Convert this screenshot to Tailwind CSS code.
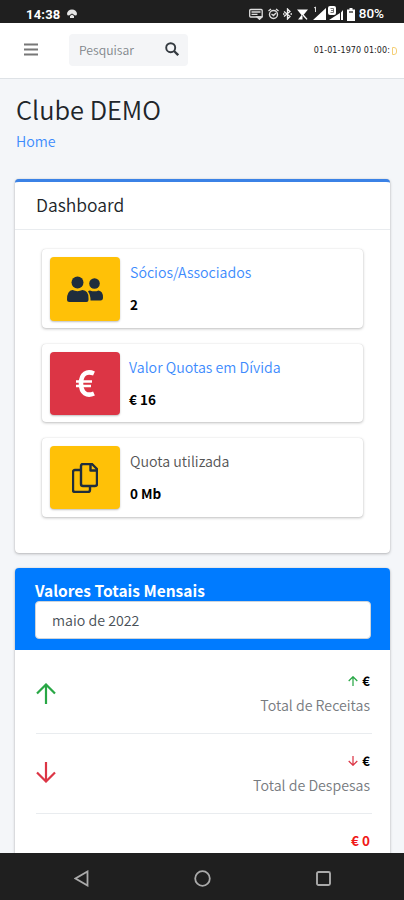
<!doctype html>
<html lang="pt">
<head>
    <meta charset="UTF-8">
    <meta name="viewport" content="width=device-width, initial-scale=1">
    <title>Clube DEMO</title>
    <script src="https://cdn.jsdelivr.net/npm/@tailwindcss/browser@4"></script>
</head>
<body class="bg-[#f4f6f9] font-['Noto_Sans_CJK_JP','Noto_Sans',sans-serif] font-[350] text-[#212529]">
<div class="flex flex-col h-[900px] overflow-hidden">

    <!-- Status bar -->
    <div class="h-[23px] shrink-0 bg-[#1f1f1f] text-white flex items-center pl-[26px] pr-5 pt-[5px] font-['Roboto',sans-serif]">
        <span class="text-[13px] leading-none font-bold tracking-[0.2px]">14:38</span>
        <svg class="ml-[6px] w-[10px] h-[10px]" viewBox="0 0 10 10" fill="#e5e5e5"><path d="M0 5a5 4.500 0 0 1 10 0q0 1.500-2 1.500L5 4.500 2 6.500Q0 6.500 0 5zM3 7 5 5.400 7 7v2H3z"/></svg>
        <div class="ml-auto flex items-center">
            <svg class="w-[14px] h-3" viewBox="0 0 14 12" fill="none" stroke="#ddd" stroke-width="1.300"><rect x=".7" y="1.500" width="12.500" height="7.500" rx="1"/><path d="M2.500 4h9M2.500 6.300h6M8 9h5l-2.500 2.300z"/></svg>
            <svg class="ml-[5px] w-[11px] h-3" viewBox="0 0 11 12" fill="none" stroke="#ddd" stroke-width="1.400"><circle cx="5.500" cy="6.500" r="4"/><path d="M.5 3 3 1M10.500 3 8 1M3.500 6l2 1.500L8 5"/></svg>
            <svg class="ml-[4px] w-[9px] h-3" viewBox="0 0 9 12" fill="none" stroke="#eee" stroke-width="1.300"><path d="m1 3.500 6 5L4.500 11V1L7 3.500l-6 5M0 6h1.500M7.500 6H9"/></svg>
            <svg class="ml-[5px] w-[11px] h-3" viewBox="0 0 11 12" fill="#fff"><path d="M0 1.500h11L6.500 7h-2zM5.500 6v5.500H1zM6.500 8l3.500 3.500M6 7h1l3.500 4-1 .8L6 8z"/></svg>
            <svg class="ml-[4px] w-8 h-4" viewBox="0 0 32 16" fill="#fff">
                <path d="M14 2v12H1zM31 4v10h-2V6.500zM28 7v7H17z"/>
                <path d="M2 2 3.500 1v5" fill="none" stroke="#ddd"/>
                <rect x="16" y="0" width="8" height="9" rx="2"/>
                <path d="M18.500 2.500h3v4h-3M19 4.500h2.500" fill="none" stroke="#555" stroke-width=".8"/>
            </svg>
            <svg class="ml-[3px] w-[8px] h-[13px]" viewBox="0 0 8 13"><path d="M2.500 0h3v1.500H8V13H0V1.500h2.500z" fill="#fff"/><path d="M2 4h4" stroke="#444" stroke-width="1.500"/></svg>
            <span class="ml-1 text-[13.500px] leading-none font-medium">80%</span>
        </div>
    </div>

    <!-- Navbar -->
    <div class="h-14 shrink-0 bg-white border-b border-[#dee2e6] flex items-center pl-6 pr-[7px]">
        <svg class="w-[14px] h-[13px] -mt-[3px]" viewBox="0 0 14 13" stroke="#777" stroke-width="2"><path d="M0 1.500h14M0 6.500h14M0 11.500h14"/></svg>
        <div class="ml-[31px] -mt-px w-[119px] h-8 rounded-sm bg-[#f4f5f7] flex items-center pl-[10px] pr-[9px]">
            <span class="text-[12.200px] leading-none text-[#80858a]">Pesquisar</span>
            <svg class="ml-auto -mt-[2px] w-[14px] h-[14px]" viewBox="0 0 14 14" fill="none" stroke="#343a40" stroke-width="1.900"><circle cx="5.700" cy="5.700" r="4.500"/><path d="m9 9 4.200 4.200" stroke-width="2.300"/></svg>
        </div>
        <div class="ml-auto flex text-[8px] leading-none font-normal font-['DejaVu_Sans',sans-serif] text-[#222] whitespace-nowrap"><span class="tracking-[0.080px]">01-01-1970 01:00:</span><span class="ml-[2px] w-[5px] h-2 border border-[#f5cf76] rounded-r-[3px]"></span></div>
    </div>

    <!-- Content -->
    <div class="flex-1 min-h-0 overflow-hidden px-[15px]">
        <h1 class="mt-[14px] text-[25.400px] leading-8 font-[350] pl-px"><span>Clube DEMO</span></h1>
        <div class="mt-px text-[14.200px] leading-[30px] text-[#3d8bfd] pl-px"><span>Home</span></div>

        <div class="mt-[23px] h-[374px] bg-white rounded border-t-[3px] border-[#3b82e6] shadow-[0_0_1px_rgba(0,0,0,.2),0_1px_3px_rgba(0,0,0,.25)] w-[375px]">
            <div class="h-12 border-b border-[#e9ecef] px-[21px] text-[17.500px] leading-[45px]"><span>Dashboard</span></div>
            <div class="pt-[19px] pl-[27px] pr-[27px] flex flex-col gap-4">
                <div class="h-[79px] bg-white rounded flex p-2 shadow-[0_0_1px_rgba(0,0,0,.15),0_1px_3px_rgba(0,0,0,.25)]">
                    <div class="w-[70px] h-16 rounded bg-[#ffc107] shadow-[0_1px_2px_rgba(0,0,0,.25)] flex items-center justify-center">
                        <svg class="w-9 h-[26px]" viewBox="0 0 36 26" fill="#1f2d3d">
                            <circle cx="10.500" cy="6.500" r="6"/>
                            <path d="M5.500 14q5 2.300 10 0 6 .5 6 8v2q0 2-2 2h-17q-2.500 0-2.500-2.500Q0 14.500 5.500 14z"/>
                            <circle cx="27.500" cy="7.500" r="5.300"/>
                            <path d="M23 14.500q4.500 1.700 8.500 0 4.500.5 4.500 7 0 3-2.500 3H23.500q0-6-2.500-9 .8-1 2-1z"/>
                        </svg>
                    </div>
                    <div class="ml-[10px] text-[14.200px] leading-8"><p class="text-[#3d8bfd] -mt-px"><span>Sócios/Associados</span></p><p class="text-[13.500px] font-bold text-black"><span>2</span></p></div>
                </div>
                <div class="h-[78px] bg-white rounded flex p-2 shadow-[0_0_1px_rgba(0,0,0,.15),0_1px_3px_rgba(0,0,0,.25)]">
                    <div class="w-[70px] h-[63px] rounded bg-[#dc3545] shadow-[0_1px_2px_rgba(0,0,0,.25)] flex items-center justify-center">
                        <svg class="w-[19px] h-[27px]" viewBox="0 0 19 27" fill="none" stroke="#fff"><path d="M18 3.500C11 .5 5 3.500 5 13.500S11 26.500 18 23.500" stroke-width="4.600"/><path d="M0 11.500h16M0 16h15" stroke-width="2.600"/></svg>
                    </div>
                    <div class="ml-[9px] text-[14.200px] leading-8"><p class="text-[#3d8bfd] -mt-px"><span>Valor Quotas em Dívida</span></p><p class="text-[13.500px] font-bold text-black"><span>€ 16</span></p></div>
                </div>
                <div class="h-[79px] bg-white rounded flex p-2 shadow-[0_0_1px_rgba(0,0,0,.15),0_1px_3px_rgba(0,0,0,.25)]">
                    <div class="w-[70px] h-[63px] rounded bg-[#ffc107] shadow-[0_1px_2px_rgba(0,0,0,.25)] flex items-center justify-center">
                        <svg class="w-[26px] h-[30px]" viewBox="0 0 26 30" fill="none" stroke="#1f2d3d" stroke-width="2.400" stroke-linejoin="round"><path d="M8.500 7H3q-2 0-2 2v18q0 2 2 2h13q2 0 2-2v-4"/><path d="M11 1h9l5 5v15q0 2-2 2H11q-2 0-2-2V3q0-2 2-2zM18.500 1.500V7.500H25"/></svg>
                    </div>
                    <div class="ml-[10px] text-[14.200px] leading-8"><p class="text-[#555] -mt-px"><span>Quota utilizada</span></p><p class="text-[13.500px] font-bold text-black"><span>0 Mb</span></p></div>
                </div>
            </div>
        </div>

        <div class="mt-[15px] h-[400px] bg-white rounded w-[375px] shadow-[0_0_1px_rgba(0,0,0,.2),0_1px_3px_rgba(0,0,0,.25)]">
            <div class="h-[82px] bg-[#007bff] rounded-t px-5 pt-3">
                <h3 class="text-[15.500px] leading-5 font-bold text-white"><span>Valores Totais Mensais</span></h3>
                <div class="mt-px h-[38px] w-[336px] rounded bg-white border border-[#ced4da] pl-4 text-[14.200px] leading-[37px] text-[#495057]"><span>maio de 2022</span></div>
            </div>
            <div class="pl-[21px] pr-[18px]">
                <div class="h-[84px] border-b border-[#e9ecef] flex items-center justify-between pr-[2px]">
                    <svg class="w-5 h-[21px] mt-[3px]" viewBox="0 0 20 21" fill="none" stroke="#28a745" stroke-width="2.200"><path d="M10 21V1.500M1 10.500l9-9 9 9"/></svg>
                    <div class="text-right leading-6 mt-[3px]">
                        <p class="text-[13px] font-bold text-black flex items-center justify-end gap-1"><svg class="w-[10px] h-[10px]" viewBox="0 0 20 21" fill="none" stroke="#28a745" stroke-width="2.600"><path d="M10 21V1.500M1 10.500l9-9 9 9"/></svg>€</p>
                        <p class="text-[14.200px] text-[#777b7f]"><span>Total de Receitas</span></p>
                    </div>
                </div>
                <div class="h-20 border-b border-[#e9ecef] flex items-center justify-between pr-[2px]">
                    <svg class="w-5 h-[21px] -mt-[2px]" viewBox="0 0 20 21" fill="none" stroke="#dc3545" stroke-width="2.200"><path d="M10 0v19.500M1 10.500l9 9 9-9"/></svg>
                    <div class="text-right leading-6 -mt-[2px]">
                        <p class="text-[13px] font-bold text-black flex items-center justify-end gap-1"><svg class="w-[10px] h-[10px]" viewBox="0 0 20 21" fill="none" stroke="#dc3545" stroke-width="2.600"><path d="M10 0v19.500M1 10.500l9 9 9-9"/></svg>€</p>
                        <p class="text-[14.200px] text-[#777b7f]"><span>Total de Despesas</span></p>
                    </div>
                </div>
                <p class="mt-[14px] pr-[2px] text-right text-[13.500px] leading-6 font-bold text-[#f01818]">€ 0</p>
            </div>
        </div>
    </div>

    <!-- Android navigation -->
    <div class="h-[47px] shrink-0 bg-[#1f1f1f] flex items-center pl-[74px] pr-[73px] pt-[3px] justify-between">
        <svg class="w-[15px] h-[17px]" viewBox="0 0 15 17" fill="none" stroke="#aaa" stroke-width="1.800"><path d="M13.500 1.500v14L1.500 8.500z"/></svg>
        <svg class="w-[17px] h-[17px]" viewBox="0 0 17 17" fill="none" stroke="#aaa" stroke-width="1.800"><circle cx="8.500" cy="8.500" r="7.300"/></svg>
        <svg class="w-[15px] h-[15px]" viewBox="0 0 15 15" fill="none" stroke="#aaa" stroke-width="1.900"><rect x="1" y="1" width="13" height="13" rx="1.500"/></svg>
    </div>
</div>
</body>
</html>
